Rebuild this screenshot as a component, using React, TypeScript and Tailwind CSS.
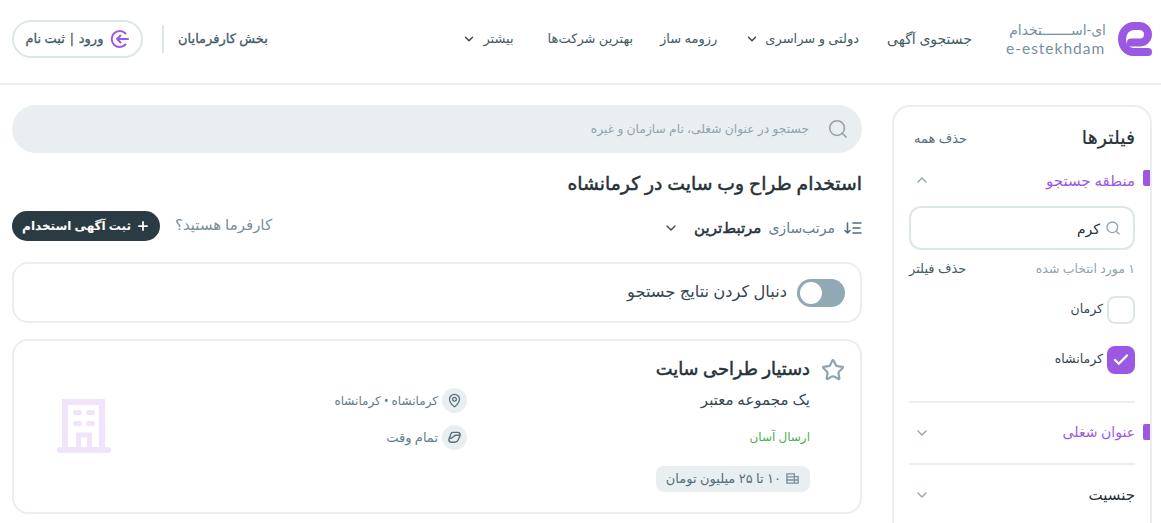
import React from 'react';
import { ChevronDown, ChevronUp, Search, Star, Check, Plus, MapPin } from 'lucide-react';

function Logo() {
  return (
    <svg width="34" height="34" viewBox="0 0 34 34" fill="none">
      <path d="M30 30H15.500C8.500 30 4 24 4 17S9 4 16 4H21C26 4 30 7.500 30 12.500S26 20.500 22 20.500H13" stroke="#9B59E3" strokeWidth="8" strokeLinecap="round" strokeLinejoin="round" />
    </svg>
  );
}

function Header() {
  return (
    <header className="h-[85px] border-b-2 border-[#e9eef0] flex items-center justify-between pr-[9px] pl-[12px] pb-[6px] text-[13px] text-[#455a64]">
      <div className="flex items-center">
        <Logo />
        <div className="mr-[12px] ml-[34px] w-[100px] text-[#78909c] leading-[18px]">
          <div className="text-[14px] text-right whitespace-nowrap">ای-اســـــــتخدام</div>
          <div dir="ltr" className="text-[15.500px] tracking-[1px] whitespace-nowrap font-['Lato',sans-serif]">e-estekhdam</div>
        </div>
        <span className="text-[14px]">جستجوی آگهی</span>
        <div className="flex items-center gap-[6px] mr-[28px]">
          <span>دولتی و سراسری</span>
          <ChevronDown className="w-[14px] h-[14px] text-[#37474f]" strokeWidth={2.5} />
        </div>
        <span className="mr-[28px]">رزومه ساز</span>
        <span className="mr-[27px]">بهترین شرکت‌ها</span>
        <div className="flex items-center gap-[7px] mr-[34px]">
          <span>بیشتر</span>
          <ChevronDown className="w-[14px] h-[14px] text-[#37474f]" strokeWidth={2.5} />
        </div>
      </div>
      <div className="flex items-center">
        <span className="[-webkit-text-stroke:0.3px_#455a64]">بخش کارفرمایان</span>
        <div className="w-[2px] h-[28px] bg-[#dde6e8] mr-[14px] ml-[19px]" />
        <button className="h-[38px] w-[131px] border-2 border-[#dde6e8] rounded-full flex items-center justify-center gap-[6px] [-webkit-text-stroke:0.3px_#455a64]">
          <svg width="20" height="20" viewBox="0 0 20 20" fill="none" stroke="#9B59E3" strokeWidth="2" strokeLinecap="round" strokeLinejoin="round">
            <path d="M16.500 4.500A8 8 0 1 0 16.500 15.500" />
            <path d="M19 10H8M11.500 6.500 8 10l3.500 3.500" />
          </svg>
          <span>ورود | ثبت نام</span>
        </button>
      </div>
    </header>
  );
}

function Section({ label, active }: { label: string; active?: boolean }) {
  return (
    <div className="relative flex items-center justify-between h-[62px] border-t-2 border-[#e9eef0] mx-[15px]">
      {active && <div className="absolute -right-[15px] top-[21px] w-[7px] h-[16px] bg-[#9b59e3] rounded-l-[2px]" />}
      <span className={active ? 'text-[14px] text-[#9b59e3] -mt-[3px]' : 'text-[15px] text-[#263238] -mt-[2px]'}>{label}</span>
      <ChevronDown className="w-[16px] h-[16px] text-[#90a4ae] ml-[5px]" strokeWidth={2} />
    </div>
  );
}

function Sidebar() {
  return (
    <aside className="w-[260px] h-[440px] shrink-0 border-2 border-[#e9eef0] rounded-[18px] pt-[16px]">
      <div className="flex items-center justify-between px-[15px] h-[28px]">
        <span className="text-[19px] text-[#263238] [-webkit-text-stroke:0.2px_#263238]">فیلترها</span>
        <span className="text-[13px] text-[#546e7a] ml-[5px] mt-[3px]">حذف همه</span>
      </div>
      <div className="relative flex items-center justify-between px-[15px] mt-[17px] h-[24px]">
        <div className="absolute right-0 top-[2px] w-[7px] h-[16px] bg-[#9b59e3] rounded-l-[2px]" />
        <span className="text-[15px] text-[#9b59e3]">منطقه جستجو</span>
        <ChevronUp className="w-[16px] h-[16px] text-[#90a4ae] ml-[5px]" strokeWidth={2} />
      </div>
      <div className="px-[15px] mt-[14px]">
        <div className="h-[44px] border-2 border-[#dde6e8] rounded-[12px] flex items-center gap-[5px] px-[12px]">
          <Search className="w-[16px] h-[16px] text-[#90a4ae]" />
          <span className="text-[14px] text-[#263238]">کرم</span>
        </div>
        <div className="flex items-center justify-between mt-[9px] h-[20px]">
          <span className="text-[12.500px] text-[#90a4ae]">۱ مورد انتخاب شده</span>
          <span className="text-[13px] text-[#455a64]">حذف فیلتر</span>
        </div>
        <div className="flex items-center gap-[4px] mt-[17px] h-[28px]">
          <div className="w-[28px] h-[28px] border-2 border-[#dde6e8] rounded-[8px]" />
          <span className="text-[12.500px] text-[#37474f] -mt-[2px]">کرمان</span>
        </div>
        <div className="flex items-center gap-[4px] mt-[22px] h-[28px] mb-[27px]">
          <div className="w-[28px] h-[28px] bg-[#9b59e3] rounded-[8px] flex items-center justify-center">
            <Check className="w-[18px] h-[18px] text-white" strokeWidth={3} />
          </div>
          <span className="text-[12.500px] text-[#37474f] -mt-[2px]">کرمانشاه</span>
        </div>
      </div>
      <Section label="عنوان شغلی" active />
      <Section label="جنسیت" />
    </aside>
  );
}

function JobCard() {
  return (
    <div className="h-[175px] border-2 border-[#e9eef0] rounded-[16px] mt-[16px] flex pr-[15px] pt-[15px]">
      <Star className="w-[24px] h-[24px] text-[#90a4ae] mt-[2px] shrink-0" strokeWidth={2.200} />
      <div className="w-[343px] mr-[11px] shrink-0">
        <div className="text-[17.800px] text-[#263238] h-[28px] leading-[25px] [-webkit-text-stroke:0.5px_#263238]">دستیار طراحی سایت</div>
        <div className="text-[15px] text-[#37474f] mt-[4px]">یک مجموعه معتبر</div>
        <div className="text-[12px] text-[#4caf50] mt-[17px]">ارسال آسان</div>
        <div className="mt-[20px] inline-flex items-center gap-[4px] h-[26px] px-[10px] bg-[#e9eef0] rounded-[8px] text-[13px] text-[#546e7a]">
          <svg width="15" height="15" viewBox="0 0 16 16" fill="none" stroke="#78909c" strokeWidth="1.400">
            <path d="M2 3h8v10H2zM10 6h4v7h-4zM2 6.300h8M2 9.600h12" />
          </svg>
          <span>۱۰ تا ۲۵ میلیون تومان</span>
        </div>
      </div>
      <div className="mt-[32px] text-[#607d8b]">
        <div className="flex items-center gap-[4px] text-[12px]">
          <div className="w-[25px] h-[25px] rounded-full bg-[#e9eef0] flex items-center justify-center">
            <MapPin className="w-[15px] h-[15px] text-[#546e7a]" />
          </div>
          <span>کرمانشاه • کرمانشاه</span>
        </div>
        <div className="flex items-center gap-[4px] mt-[12px] text-[13px]">
          <div className="w-[25px] h-[25px] rounded-full bg-[#e9eef0] flex items-center justify-center">
            <svg width="15" height="15" viewBox="0 0 16 16" fill="none" stroke="#546e7a" strokeWidth="1.500" strokeLinejoin="round">
              <path d="M6 2.500h5.500c1.500 0 2.500 1 2.500 2.500 0 2-1 3-1.500 4-.5 2-2 4-4.500 4H4.500c-1.500 0-2.500-1-2.500-2.500 0-2 1-3 1.500-4C4 4 4.500 2.500 6 2.500Z" />
              <path d="M2.500 9c3 0 4-1 5-2.500S10 6 14 5.500" />
            </svg>
          </div>
          <span>تمام وقت</span>
        </div>
      </div>
      <div className="flex-1 flex pl-[43px] justify-end pt-[43px]">
        <svg width="54" height="54" viewBox="0 0 54 54" fill="#efe4f9">
          <path d="M8 50V3h37v47" fill="none" stroke="#efe4f9" strokeWidth="6" />
          <path d="M21.500 50V36h11v14" fill="none" stroke="#efe4f9" strokeWidth="5" />
          <rect x="0" y="48" width="54" height="6" rx="3" />
          <rect x="16" y="11" width="9" height="5" rx="2.500" />
          <rect x="29" y="11" width="9" height="5" rx="2.500" />
          <rect x="16" y="22" width="9" height="5" rx="2.500" />
          <rect x="29" y="22" width="9" height="5" rx="2.500" />
        </svg>
      </div>
    </div>
  );
}

function Main() {
  return (
    <main className="flex-1 min-w-0">
      <div className="h-[48px] rounded-[24px] bg-[#e9eef0] flex items-center pr-[13px] gap-[18px]">
        <Search className="w-[22px] h-[22px] text-[#90a4ae]" strokeWidth={1.700} />
        <span className="text-[12.300px] text-[#90a4ae]">جستجو در عنوان شغلی، نام سازمان و غیره</span>
      </div>
      <h1 className="text-[18.800px] font-normal text-[#263238] mt-[16px] h-[28px] leading-[28px] [-webkit-text-stroke:0.5px_#263238]">استخدام طراح وب سایت در کرمانشاه</h1>
      <div className="flex items-center justify-between mt-[14px] h-[30px]">
        <div className="flex items-center pt-[3px]">
          <svg width="18" height="14" viewBox="0 0 18 14" fill="none" stroke="#546e7a" strokeWidth="1.600" strokeLinecap="round" strokeLinejoin="round">
            <path d="M9 2h8M9 7h7M9 12h8M3.500 2v10M1 9.500 3.500 12 6 9.500" />
          </svg>
          <span className="text-[14px] text-[#607d8b] mr-[9px]">مرتب‌سازی</span>
          <span className="text-[15px] text-[#263238] mr-[7px] [-webkit-text-stroke:0.5px_#263238]">مرتبط‌ترین</span>
          <ChevronDown className="w-[16px] h-[16px] text-[#37474f] mr-[15px]" strokeWidth={2} />
        </div>
        <div className="flex items-center gap-[15px]">
          <span className="text-[15px] text-[#78909c] -mt-[3px]">کارفرما هستید؟</span>
          <button className="h-[30px] w-[148px] rounded-full bg-[#2b3b43] text-white text-[12px] font-bold flex items-center justify-center gap-[5px]">
            <Plus className="w-[14px] h-[14px]" strokeWidth={3} />
            <span>ثبت آگهی استخدام</span>
          </button>
        </div>
      </div>
      <div className="h-[61px] border-2 border-[#e9eef0] rounded-[16px] mt-[21px] flex items-center pr-[15px] gap-[10px]">
        <div className="w-[48px] h-[28px] rounded-full bg-[#90a9b4] flex items-center justify-end px-[3px]">
          <div className="w-[22px] h-[22px] rounded-full bg-white" />
        </div>
        <span className="text-[16.300px] text-[#37474f] -mt-[3px]">دنبال کردن نتایج جستجو</span>
      </div>
      <JobCard />
    </main>
  );
}

export default function App() {
  return (
    <div dir="rtl" className="w-[1161px] h-[523px] overflow-hidden bg-white font-['Noto_Sans','DejaVu_Sans',sans-serif]">
      <Header />
      <div className="flex gap-[30px] pr-[9px] pl-[12px] pt-[20px]">
        <Sidebar />
        <Main />
      </div>
    </div>
  );
}
